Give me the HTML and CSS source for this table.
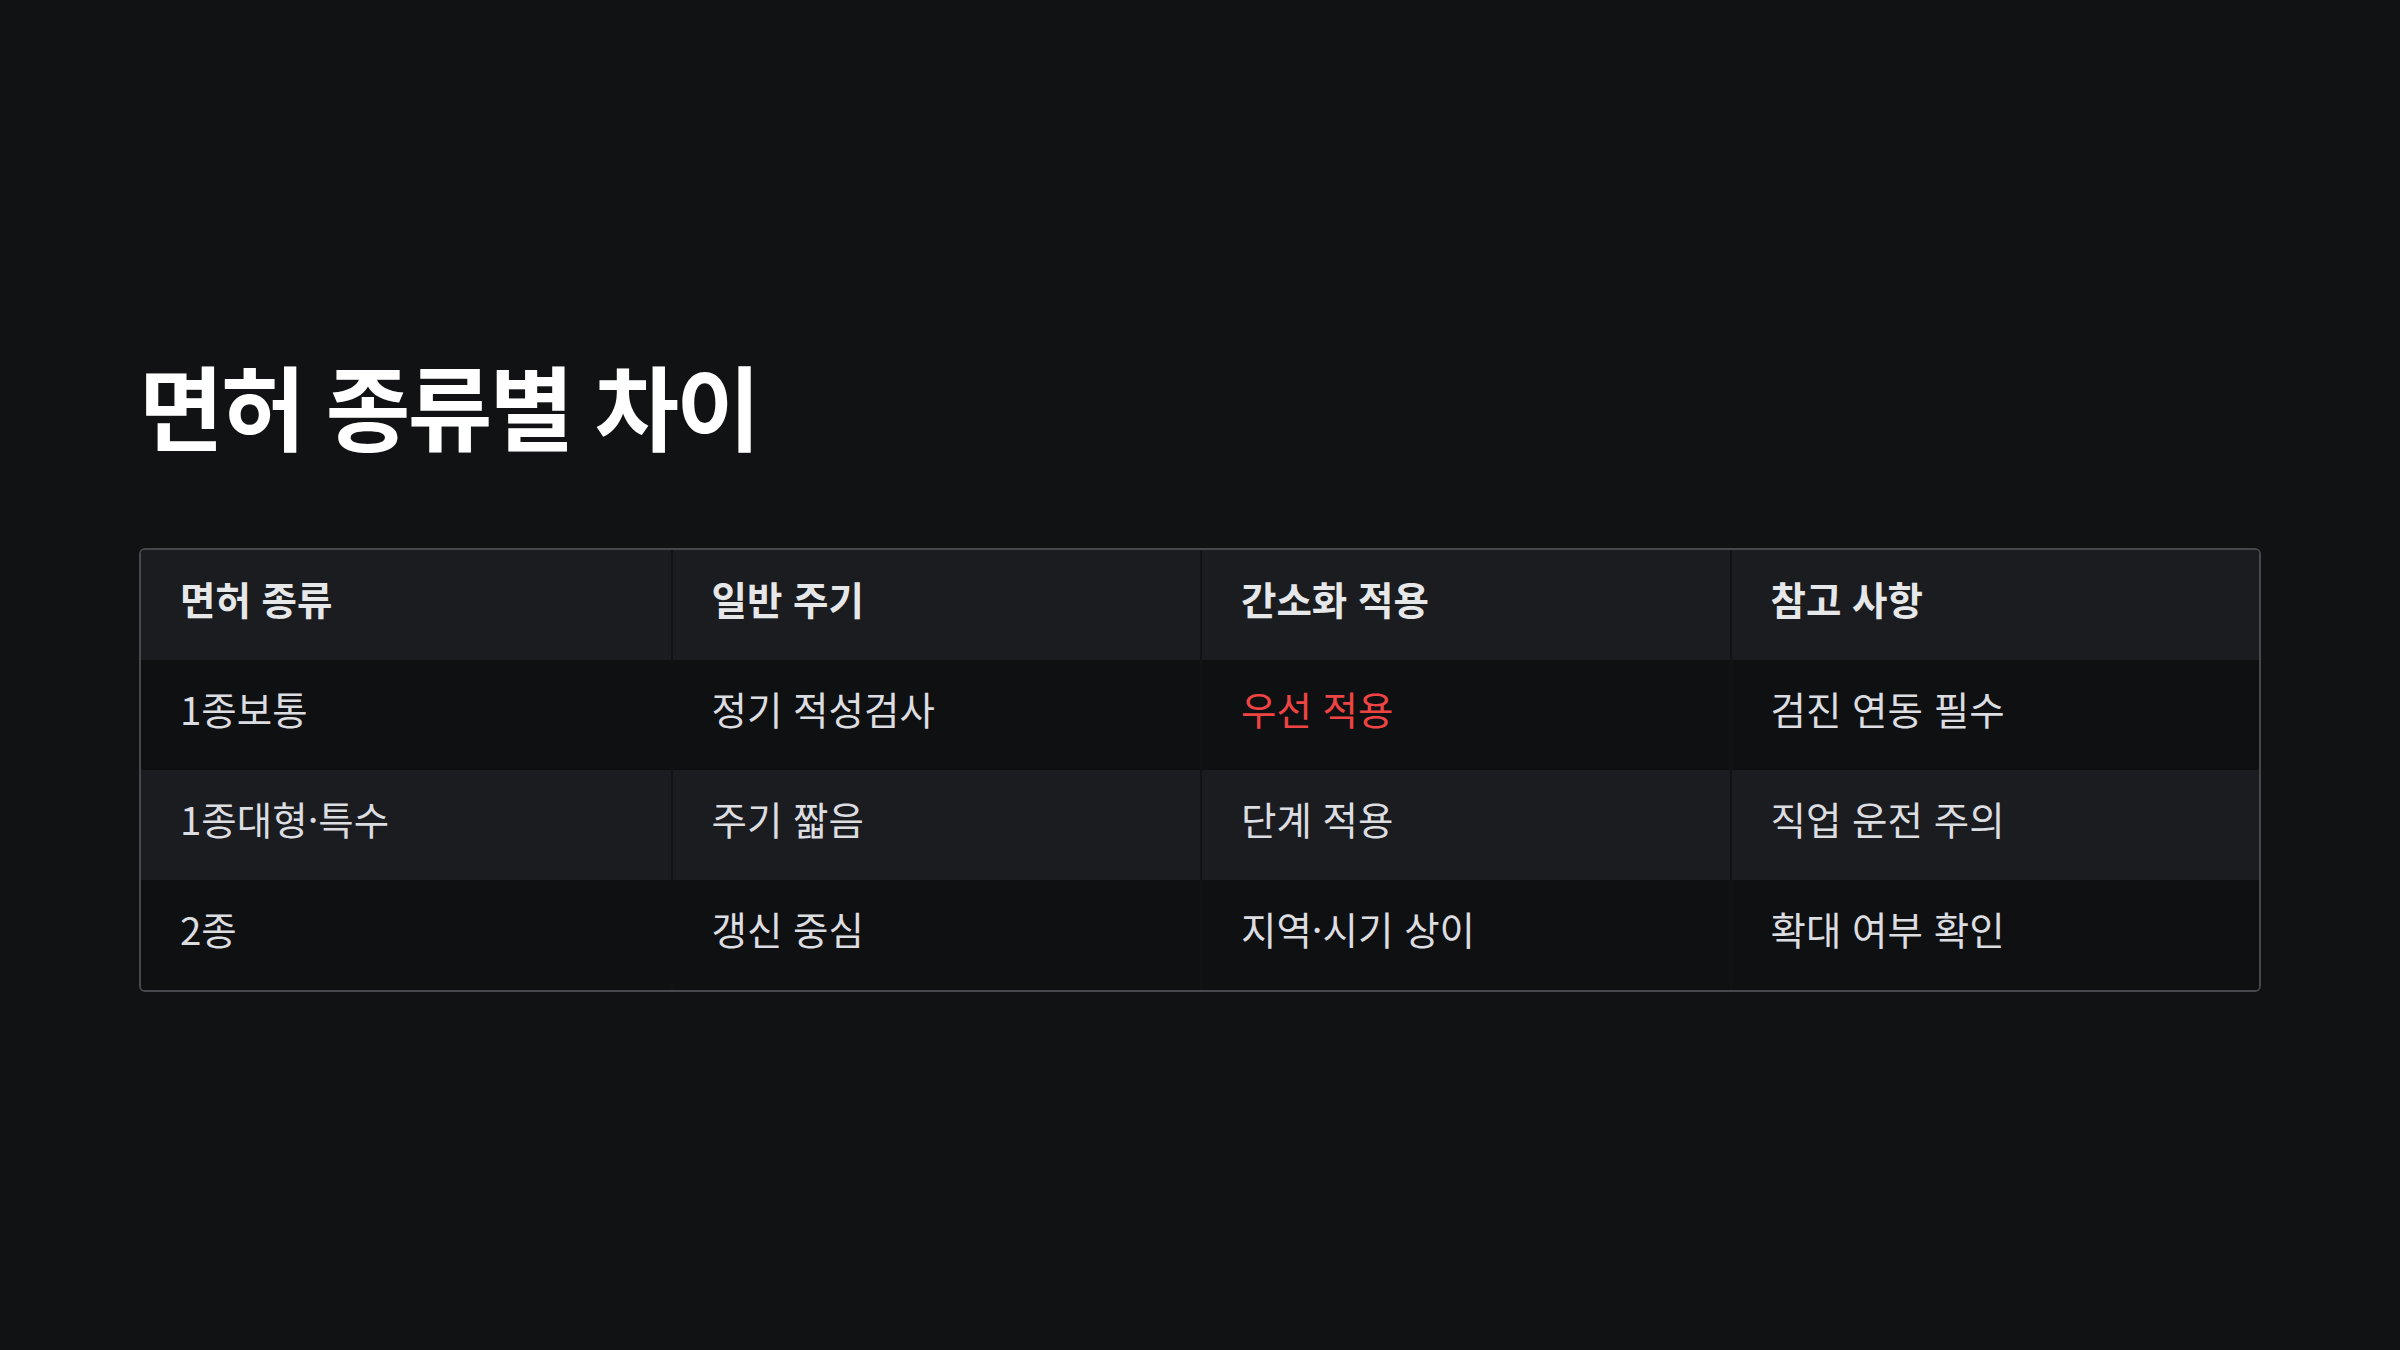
FILE: index.html
```html
<!DOCTYPE html>
<html lang="ko">
<head>
<meta charset="utf-8">
<link rel="stylesheet" href="styles.css">
</head>
<body>
<main class="slide">
  <h1 class="title">면허 종류별 차이</h1>
  <div class="table">
    <div class="row head">
      <div class="cell">면허 종류</div>
      <div class="cell">일반 주기</div>
      <div class="cell">간소화 적용</div>
      <div class="cell">참고 사항</div>
    </div>
    <div class="row">
      <div class="cell">1종보통</div>
      <div class="cell">정기 적성검사</div>
      <div class="cell accent">우선 적용</div>
      <div class="cell">검진 연동 필수</div>
    </div>
    <div class="row alt">
      <div class="cell">1종대형·특수</div>
      <div class="cell">주기 짧음</div>
      <div class="cell">단계 적용</div>
      <div class="cell">직업 운전 주의</div>
    </div>
    <div class="row">
      <div class="cell">2종</div>
      <div class="cell">갱신 중심</div>
      <div class="cell">지역·시기 상이</div>
      <div class="cell">확대 여부 확인</div>
    </div>
  </div>
</main>
</body>
</html>
```

FILE: styles.css
```css
html, body {
  margin: 0;
  padding: 0;
  background: #111214;
}
body {
  width: 2400px;
  height: 1350px;
  overflow: hidden;
  font-family: "Noto Sans CJK KR", "Noto Sans", sans-serif;
  color: #e4e5e7;
}
.slide {
  padding: 344px 139px 0 139px;
}
.title {
  margin: 0;
  font-size: 92px;
  font-weight: 700;
  line-height: 120px;
  letter-spacing: -0.03em;
  color: #ffffff;
}
.table {
  margin-top: 84px;
  border: 2px solid #46484b;
  border-radius: 6px;
  overflow: hidden;
}
.row {
  display: grid;
  grid-template-columns: repeat(4, 1fr);
  height: 110px;
  background: #0f1012;
}
.row.head, .row.alt {
  background: #1b1c1f;
}
.cell {
  display: flex;
  align-items: center;
  padding: 0 0 15px 39px;
  font-size: 38.5px;
  color: #dcdde0;
  border-left: 2px solid #111214;
}
.cell:first-child {
  border-left: none;
}
.head .cell {
  font-weight: 700;
  color: #e6e7e9;
}
.accent {
  color: #ef4444;
}
```
